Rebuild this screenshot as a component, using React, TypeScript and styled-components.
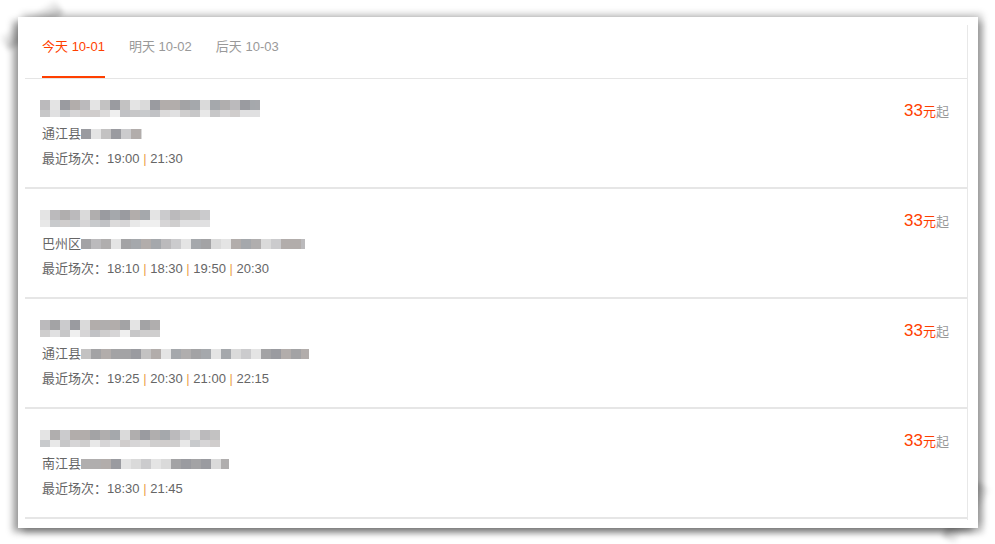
import React from "react";
import styled, { createGlobalStyle } from "styled-components";

const GlobalStyle = createGlobalStyle`
  html {
    background: #fff;
  }
  body {
    margin: 0;
    padding: 0;
    font-family: "Liberation Sans", Arial, "Noto Sans CJK SC", sans-serif;
    font-size: 13px;
    color: #666;
  }
`;

const tabs = [
  { label: "今天", date: "10-01" },
  { label: "明天", date: "10-02" },
  { label: "后天", date: "10-03" },
];

const cinemas = [
  { title: 220, place: "通江县", addr: 61, times: ["19:00", "21:30"], seed: 3 },
  { title: 170, place: "巴州区", addr: 224, times: ["18:10", "18:30", "19:50", "20:30"], seed: 11 },
  { title: 120, place: "通江县", addr: 228, times: ["19:25", "20:30", "21:00", "22:15"], seed: 27 },
  { title: 180, place: "南江县", addr: 148, times: ["18:30", "21:45"], seed: 41 },
];

// small deterministic grey palette for the pixelated (blurred out) text
const greys = ["#9a9a9c", "#a8a6a6", "#b4b3b5", "#8f9196", "#bdbcbc", "#c6c6c8", "#aaa5a2", "#d6d6d6", "#9c9fa3", "#e2e2e2"];

function makeCells(count: number, seed: number) {
  let s = seed * 9301 + 49297;
  const out: string[] = [];
  for (let i = 0; i < count; i++) {
    s = (s * 9301 + 49297) % 233280;
    out.push(greys[Math.floor((s / 233280) * greys.length)]);
  }
  return out;
}

function Mosaic({ width, seed, rows, lead }: { width: number; seed: number; rows: number; lead?: boolean }) {
  const count = Math.ceil(width / 10);
  return (
    <MosaicBox lead={lead} style={{ width }}>
      {Array.from({ length: rows }).map((_, r) => (
        <MosaicRow key={r} light={r > 0}>
          {makeCells(count, seed + r * 7).map((c, i) => (
            <Cell key={i} style={{ background: c }} />
          ))}
        </MosaicRow>
      ))}
    </MosaicBox>
  );
}

function App() {
  return (
    <Page>
      <GlobalStyle />
      <Card>
        <Panel>
          <TabBar>
            {tabs.map((t, i) => (
              <Tab key={t.date} active={i === 0}>
                {t.label} {t.date}
              </Tab>
            ))}
          </TabBar>
          {cinemas.map((c, i) => (
            <Row key={i}>
              <Info>
                <Line>
                  <Mosaic width={c.title} seed={c.seed} rows={2} lead />
                </Line>
                <Line>
                  {c.place}
                  <Mosaic width={c.addr} seed={c.seed + 5} rows={1} />
                </Line>
                <Line>
                  最近场次：
                  {c.times.map((t, j) => (
                    <React.Fragment key={t}>
                      {j > 0 && <Sep> | </Sep>}
                      {t}
                    </React.Fragment>
                  ))}
                </Line>
              </Info>
              <Price>
                <Amount>33</Amount>
                <Unit>元</Unit>
                <From>起</From>
              </Price>
            </Row>
          ))}
        </Panel>
      </Card>
    </Page>
  );
}

const Page = styled.div`
  width: 995px;
  height: 544px;
  box-sizing: border-box;
  padding: 17px 17px 16px 18px;
  overflow: hidden;
`;

const Card = styled.div`
  position: relative;
  height: 100%;
  box-sizing: border-box;
  padding: 8px 10px 8px 7px;
  background: #fff;
  box-shadow: -5px 4px 7px rgba(0, 0, 0, 0.38), 4px -3px 7px rgba(0, 0, 0, 0.22),
    5px 5px 6px rgba(0, 0, 0, 0.22);
  /* page-curl corners of the screenshot frame */
  &::before {
    content: "";
    position: absolute;
    left: -18px;
    top: 20px;
    width: 66px;
    height: 16px;
    background: linear-gradient(to bottom, rgba(0, 0, 0, 0.04), rgba(0, 0, 0, 0.22));
    transform: rotate(-34deg);
    transform-origin: left top;
    z-index: -1;
    filter: blur(2.5px);
  }
  &::after {
    content: "";
    position: absolute;
    left: 937px;
    bottom: -16px;
    width: 64px;
    height: 16px;
    background: linear-gradient(to top, rgba(0, 0, 0, 0.04), rgba(0, 0, 0, 0.22));
    transform: rotate(-57deg);
    transform-origin: left bottom;
    z-index: -1;
    filter: blur(2.5px);
  }
`;

const Panel = styled.div`
  height: 100%;
  border-right: 1px solid #e8e8e8;
  background: #fff;
`;

const TabBar = styled.div`
  display: flex;
  gap: 24px;
  height: 53px;
  padding-left: 17px;
  border-bottom: 1px solid #e5e5e5;
`;

const Tab = styled.div<{ active?: boolean }>`
  display: flex;
  align-items: center;
  height: 100%;
  box-sizing: border-box;
  padding-bottom: 10px;
  font-size: 13px;
  color: ${(p) => (p.active ? "#ff3f00" : "#999")};
  border-bottom: 2px solid ${(p) => (p.active ? "#ff3f00" : "transparent")};
  margin-bottom: -1px;
`;

const Row = styled.div`
  display: flex;
  justify-content: space-between;
  height: 110px;
  padding: 17px 18px 0 17px;
  box-sizing: border-box;
  border-bottom: 2px solid #e6e6e6;
`;

const Info = styled.div`
  display: flex;
  flex-direction: column;
`;

const Line = styled.div`
  display: flex;
  align-items: center;
  height: 25px;
  line-height: 25px;
  color: #666;
  white-space: pre;
`;

const MosaicBox = styled.div<{ lead?: boolean }>`
  display: flex;
  flex-direction: column;
  overflow: hidden;
  filter: blur(0.6px);
  margin-left: ${(p) => (p.lead ? "-2px" : "0")};
`;

const MosaicRow = styled.div<{ light?: boolean }>`
  display: flex;
  height: ${(p) => (p.light ? "7px" : "10px")};
  opacity: ${(p) => (p.light ? 0.55 : 0.9)};
`;

const Cell = styled.span`
  flex: 0 0 10px;
  height: 100%;
`;

const Sep = styled.span`
  color: #eba24a;
`;

const Price = styled.div`
  display: flex;
  align-items: baseline;
  height: 25px;
  line-height: 25px;
  margin-top: 2px;
`;

const Amount = styled.span`
  font-size: 17px;
  color: #ff3f00;
`;

const Unit = styled.span`
  font-size: 13px;
  color: #ff3f00;
`;

const From = styled.span`
  font-size: 13px;
  color: #999;
`;

export default App;
